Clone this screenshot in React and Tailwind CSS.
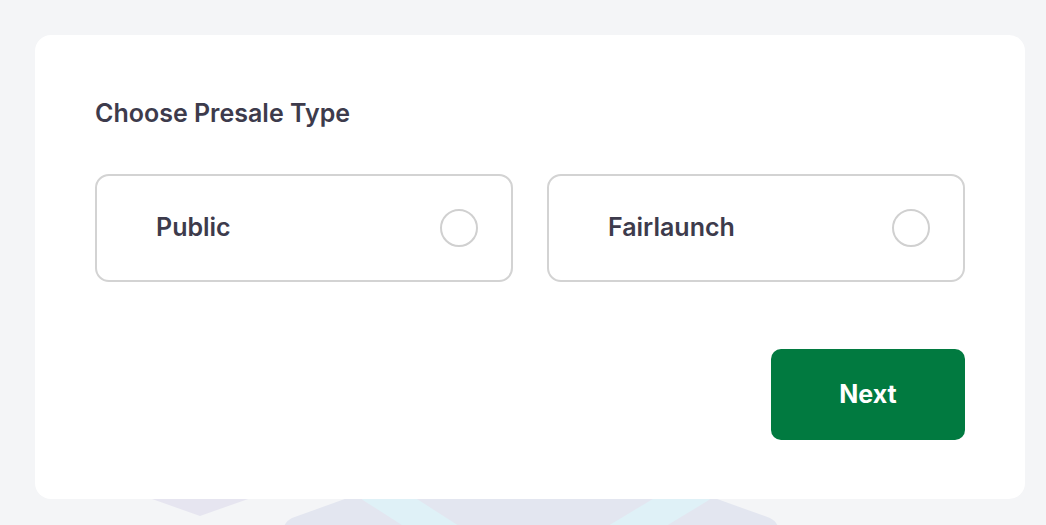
import React, { useState } from "react";

const options = [
  { id: "public", label: "Public" },
  { id: "fairlaunch", label: "Fairlaunch" },
];

export default function App() {
  const [selected, setSelected] = useState(null);

  return (
    <div
      className="relative min-h-[525px] overflow-hidden bg-[#f4f5f7] pt-[35px]"
      style={{ fontFamily: "Inter, 'Noto Sans', sans-serif" }}
    >
      {/* faint logo art behind the card */}
      <BackdropArt />

      <main className="relative z-10 ml-[35px] mr-[21px] rounded-2xl bg-white px-[60px] pb-[59px] pt-[62px]">
        <h2 className="text-[25px] font-semibold leading-8 text-[#3d3b4c]">
          Choose Presale Type
        </h2>

        <div className="mt-[45px] grid grid-cols-2 gap-[34px]">
          {options.map((opt) => (
            <button
              key={opt.id}
              onClick={() => setSelected(opt.id)}
              className="flex h-[108px] items-center justify-between rounded-[14px] border-2 border-[#d3d3d3] bg-white pl-[59px] pr-[33px] text-left"
            >
              <span className="text-[25px] font-semibold text-[#3d3b4c]">
                {opt.label}
              </span>
              <span className="flex h-[38px] w-[38px] items-center justify-center rounded-full border-2 border-[#d0d0d0]">
                {selected === opt.id && (
                  <span className="h-[20px] w-[20px] rounded-full bg-[#017a40]" />
                )}
              </span>
            </button>
          ))}
        </div>

        <div className="mt-[67px] flex justify-end">
          <button className="h-[91px] w-[194px] rounded-[10px] bg-[#017a40] text-[25px] font-bold text-white">
            Next
          </button>
        </div>
      </main>
    </div>
  );
}

function BackdropArt() {
  return (
    <svg
      className="pointer-events-none absolute left-0 top-[420px] z-0"
      width="1046"
      height="105"
      viewBox="0 420 1046 105"
      fill="none"
    >
      {/* small diamond */}
      <path d="M200 440 L262 494 L200 516 L138 494 Z" fill="#e6e5f0" />
      {/* big hexagon */}
      <path
        d="M531 432 L770 518 Q782 524 778 540 L531 640 L284 540 Q280 524 292 518 Z"
        fill="#e3e6f0"
      />
      {/* cyan chevron band */}
      <path
        d="M372 488 L531 590 L700 488"
        stroke="#dff1f7"
        strokeWidth="30"
        strokeLinejoin="round"
        strokeLinecap="round"
      />
    </svg>
  );
}
